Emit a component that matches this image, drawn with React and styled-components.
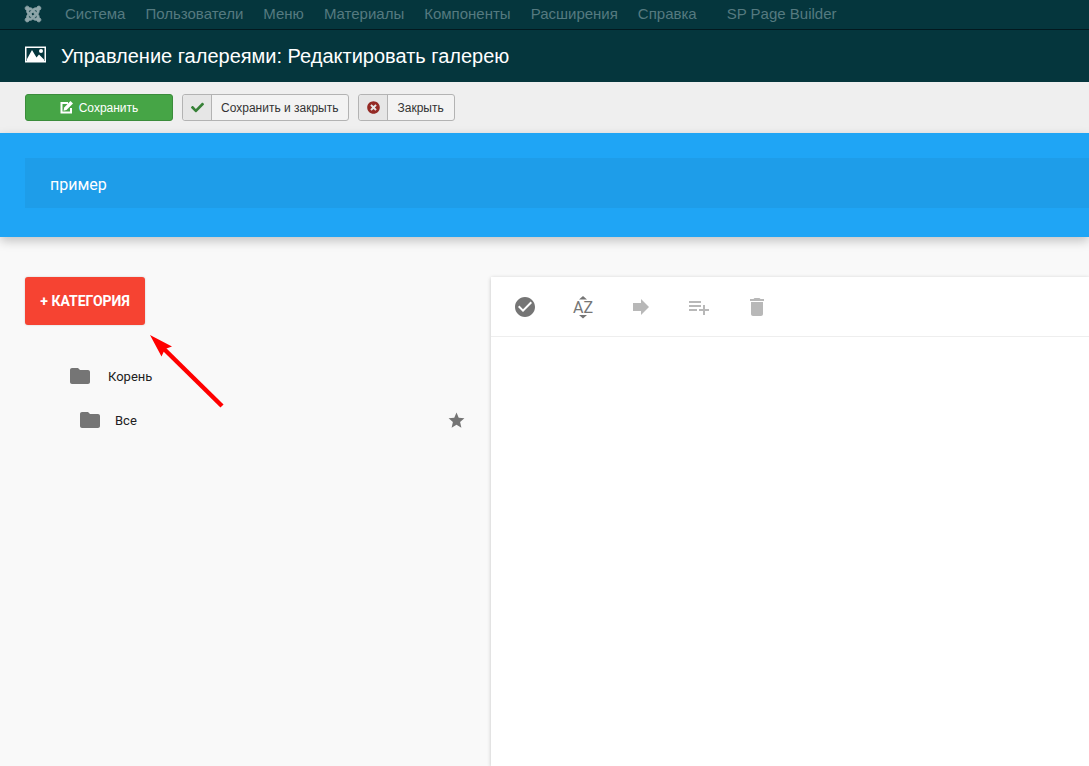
import React, { useState } from "react";
import styled, { createGlobalStyle } from "styled-components";
import { FaCheck, FaJoomla, FaTimesCircle } from "react-icons/fa";
import { MdCheckCircle, MdDelete, MdFolder, MdForward, MdStar } from "react-icons/md";

const GlobalStyle = createGlobalStyle`
  *, *::before, *::after {
    box-sizing: border-box;
  }

  body {
    margin: 0;
    background: #f9f9f9;
    font-family: "Liberation Sans", Arial, sans-serif;
  }

  button, input {
    font-family: inherit;
  }
`;

const Page = styled.div`
  min-height: 100vh;
  display: flex;
  flex-direction: column;
`;

const Navbar = styled.nav`
  height: 30px;
  padding: 0 24px 2px;
  display: flex;
  align-items: center;
  background: #05363d;
  border-bottom: 1px solid #02191f;
`;

const LogoLink = styled.a`
  display: flex;
  margin-right: 23px;
  color: #8fa6aa;
  font-size: 18px;

  svg {
    stroke: currentColor;
    stroke-width: 24px;
    overflow: visible;
  }
`;

const NavMenu = styled.ul`
  display: flex;
  gap: 20px;
  margin: 0;
  padding: 0;
  list-style: none;
`;

const NavItem = styled.li`
  margin-left: ${(props) => (props.$separated ? "10px" : "0")};
`;

const NavLink = styled.a`
  color: #557a80;
  font-size: 15px;
  line-height: 20px;
  white-space: nowrap;
  text-decoration: none;
`;

const TitleBar = styled.header`
  height: 52px;
  padding: 0 25px;
  display: flex;
  align-items: center;
  gap: 15px;
  background: #05363d;
  color: #ffffff;
`;

const Title = styled.h1`
  margin: 0;
  font-size: 20px;
  line-height: 24px;
  font-weight: normal;
`;

const ActionBar = styled.div`
  height: 51px;
  padding: 0 25px;
  display: flex;
  align-items: center;
  gap: 9px;
  background: #efefef;
`;

const SaveButton = styled.button`
  width: 148px;
  height: 27px;
  padding: 0;
  display: flex;
  align-items: center;
  justify-content: center;
  gap: 6px;
  background: #46a546;
  border: 1px solid #3b8c3b;
  border-radius: 3px;
  color: #ffffff;
  font-size: 12px;
  cursor: pointer;
`;

const ActionButton = styled.button`
  height: 27px;
  padding: 0 10px 0 0;
  display: flex;
  align-items: center;
  gap: 9px;
  background: #f3f3f3;
  border: 1px solid #b3b3b3;
  border-radius: 3px;
  color: #333333;
  font-size: 12px;
  cursor: pointer;
`;

const ActionIcon = styled.span`
  width: 29px;
  height: 25px;
  padding-bottom: 1px;
  display: flex;
  align-items: center;
  justify-content: center;
  background: #e6e6e6;
  border-right: 1px solid #b3b3b3;
  border-radius: 3px 0 0 3px;
  color: ${(props) => props.$color};
`;

const NameBar = styled.div`
  height: 104px;
  padding: 25px 0 0 25px;
  background: #1fa5f5;
  box-shadow: 0 4px 10px rgba(0, 0, 0, 0.22);
`;

const NameInput = styled.input`
  display: block;
  width: 100%;
  height: 50px;
  padding: 2px 25px 0;
  background: #1e9de9;
  border: 0;
  outline: 0;
  color: #ffffff;
  font-family: Roboto, sans-serif;
  font-size: 16px;
`;

const Content = styled.main`
  flex: 1;
  display: flex;
  padding-top: 40px;
  font-family: Roboto, sans-serif;
`;

const Sidebar = styled.aside`
  flex: 0 0 45%;
  padding: 0 22px 0 25px;
`;

const CategoryWrapper = styled.div`
  position: relative;
  width: 120px;
`;

const CategoryButton = styled.button`
  width: 100%;
  height: 48px;
  padding: 0;
  background: #f64332;
  border: 0;
  border-radius: 3px;
  box-shadow: 0 0 2px rgba(0, 0, 0, 0.2);
  color: #ffffff;
  font-size: 14px;
  font-weight: bold;
  white-space: nowrap;
  cursor: pointer;
`;

const Pointer = styled.svg`
  position: absolute;
  top: 57px;
  left: 124px;
  pointer-events: none;
`;

const Tree = styled.ul`
  margin: 29px 0 0;
  padding: 0;
  list-style: none;
`;

const TreeRow = styled.li`
  height: 44px;
  padding-left: ${(props) => (props.$level ? "53px" : "43px")};
  display: flex;
  align-items: center;
  justify-content: space-between;
`;

const TreeButton = styled.button`
  padding: 0;
  display: flex;
  align-items: center;
  gap: ${(props) => (props.$level ? "13px" : "16px")};
  background: none;
  border: 0;
  color: #212121;
  font-size: 13px;
  cursor: pointer;

  svg {
    color: #757575;
  }
`;

const Panel = styled.section`
  flex: 1;
  min-width: 0;
  margin-left: 1px;
  background: #ffffff;
  box-shadow: 0 1px 4px rgba(0, 0, 0, 0.22);
`;

const PanelToolbar = styled.div`
  height: 60px;
  padding: 0 22px;
  display: flex;
  align-items: center;
  gap: 34px;
  border-bottom: 1px solid #eeeeee;
`;

const IconButton = styled.button`
  width: 24px;
  height: 24px;
  padding: 0;
  display: flex;
  align-items: center;
  justify-content: center;
  background: none;
  border: 0;
  color: ${(props) => (props.disabled ? "#b8b8b8" : "#757575")};
`;

const menuItems = [
  "Система",
  "Пользователи",
  "Меню",
  "Материалы",
  "Компоненты",
  "Расширения",
  "Справка",
];

function PictureIcon() {
  return (
    <svg width="21" height="20" viewBox="0 0 21 20" aria-hidden="true">
      <path fill="none" stroke="currentColor" strokeWidth="1.5" d="M.75 1.250h19.500v14.500H.75z" />
      <path fill="currentColor" d="M2 15v-2L7 4l4.500 7.500 2.500-3 5 5V15z" />
      <circle cx="16" cy="5" r="2" fill="currentColor" />
    </svg>
  );
}

function EditIcon() {
  return (
    <svg width="13" height="13" viewBox="0 0 13 13" aria-hidden="true">
      <path fill="none" stroke="currentColor" strokeWidth="2" d="M8 2H1.500v9.500H11V7" />
      <path fill="currentColor" d="M10.500 0 13 2.500 6.500 9 3.500 9.800 4.200 6.500z" />
    </svg>
  );
}

function SortIcon() {
  return (
    <svg width="24" height="24" viewBox="0 0 24 24" fill="currentColor" aria-hidden="true">
      <path d="M8 4.500 12 1l4 3.500zM8 20h8l-4 3.500z" />
      <text x="12" y="18" textAnchor="middle" fontFamily="Roboto, sans-serif" fontSize="16">
        AZ
      </text>
    </svg>
  );
}

function PlaylistAddIcon() {
  return (
    <svg width="24" height="24" viewBox="0 0 24 24" fill="currentColor" aria-hidden="true">
      <path d="M14 10H2v2h12v-2zm0-4H2v2h12V6zm4 8v-4h-2v4h-4v2h4v4h2v-4h4v-2h-4zM2 16h8v-2H2v2z" />
    </svg>
  );
}

function App() {
  const [name, setName] = useState("пример");

  return (
    <Page>
      <GlobalStyle />
      <Navbar>
        <LogoLink href="#">
          <FaJoomla />
        </LogoLink>
        <NavMenu>
          {menuItems.map((item) => (
            <NavItem key={item}>
              <NavLink href="#">{item}</NavLink>
            </NavItem>
          ))}
          <NavItem $separated>
            <NavLink href="#">SP Page Builder</NavLink>
          </NavItem>
        </NavMenu>
      </Navbar>

      <TitleBar>
        <PictureIcon />
        <Title>Управление галереями: Редактировать галерею</Title>
      </TitleBar>

      <ActionBar>
        <SaveButton type="button">
          <EditIcon />
          Сохранить
        </SaveButton>
        <ActionButton type="button">
          <ActionIcon $color="#378137">
            <FaCheck size={13} />
          </ActionIcon>
          Сохранить и закрыть
        </ActionButton>
        <ActionButton type="button">
          <ActionIcon $color="#942a25">
            <FaTimesCircle size={13} />
          </ActionIcon>
          Закрыть
        </ActionButton>
      </ActionBar>

      <NameBar>
        <NameInput
          type="text"
          aria-label="Название"
          value={name}
          onChange={(e) => setName(e.target.value)}
        />
      </NameBar>

      <Content>
        <Sidebar>
          <CategoryWrapper>
            <CategoryButton type="button">+ КАТЕГОРИЯ</CategoryButton>
            <Pointer width="76" height="76" viewBox="0 0 76 76" aria-hidden="true">
              <path stroke="#ff0000" strokeWidth="4.500" d="M14 14 73 72" />
              <path fill="#ff0000" d="M1 1 23 12.500 16 15 12.500 22.500z" />
            </Pointer>
          </CategoryWrapper>
          <Tree>
            <TreeRow>
              <TreeButton type="button">
                <MdFolder size={24} />
                Корень
              </TreeButton>
            </TreeRow>
            <TreeRow $level={1}>
              <TreeButton type="button" $level={1}>
                <MdFolder size={24} />
                Все
              </TreeButton>
              <IconButton type="button" aria-label="По умолчанию">
                <MdStar size={19} />
              </IconButton>
            </TreeRow>
          </Tree>
        </Sidebar>

        <Panel>
          <PanelToolbar>
            <IconButton type="button" aria-label="Выбрать все">
              <MdCheckCircle size={24} />
            </IconButton>
            <IconButton type="button" aria-label="Сортировать">
              <SortIcon />
            </IconButton>
            <IconButton type="button" aria-label="Переместить" disabled>
              <MdForward size={24} />
            </IconButton>
            <IconButton type="button" aria-label="Добавить" disabled>
              <PlaylistAddIcon />
            </IconButton>
            <IconButton type="button" aria-label="Удалить" disabled>
              <MdDelete size={24} />
            </IconButton>
          </PanelToolbar>
        </Panel>
      </Content>
    </Page>
  );
}

export default App;
